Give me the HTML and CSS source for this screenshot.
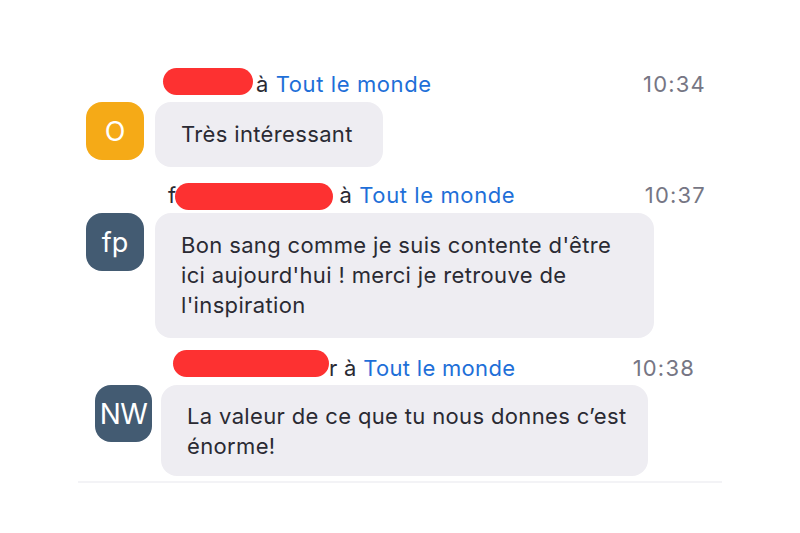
FILE: index.html
```html
<!DOCTYPE html>
<html lang="fr">
<head>
<meta charset="utf-8">
<title>Chat</title>
<link rel="stylesheet" href="styles.css">
</head>
<body>
<div class="chat">
  <div class="msg msg--one">
    <div class="head">
      <span class="who"><span class="redact redact--one"></span>à <span class="to">Tout le monde</span></span>
      <span class="time">10:34</span>
    </div>
    <div class="avatar avatar--orange">O</div>
    <div class="bubble">Très intéressant</div>
  </div>

  <div class="msg msg--two">
    <div class="head">
      <span class="who">f<span class="redact redact--two"></span> à <span class="to">Tout le monde</span></span>
      <span class="time">10:37</span>
    </div>
    <div class="avatar avatar--slate">fp</div>
    <div class="bubble">Bon sang comme je suis contente d'être<br>ici aujourd'hui ! merci je retrouve de<br>l'inspiration</div>
  </div>

  <div class="msg msg--three">
    <div class="head">
      <span class="who"><span class="redact redact--three"></span>r à <span class="to">Tout le monde</span></span>
      <span class="time">10:38</span>
    </div>
    <div class="avatar avatar--slate">NW</div>
    <div class="bubble">La valeur de ce que tu nous donnes c’est<br>énorme!</div>
  </div>

  <div class="divider"></div>
</div>
</body>
</html>
```

FILE: styles.css
```css
html, body {
  margin: 0;
  padding: 0;
  background: #ffffff;
}

body {
  font-family: "Inter", "Liberation Sans", sans-serif;
  color: #2a2a33;
}

.chat {
  padding: 71px 95px 0 86px;
  display: flex;
  flex-direction: column;
}

.msg {
  display: grid;
  grid-template-columns: 58px 1fr;
  column-gap: 11px;
  row-gap: 5px;
  align-items: start;
}

.msg--two {
  margin-top: 15px;
}

.msg--three {
  margin-top: 17px;
  padding: 0 11px 0 9px;
  column-gap: 8px;
  row-gap: 4px;
}

.head {
  grid-column: 2;
  grid-row: 1;
  display: flex;
  align-items: baseline;
  justify-content: space-between;
  height: 26px;
  line-height: 26px;
  font-size: 22px;
  letter-spacing: 0.6px;
  color: #2a2a33;
  padding-left: 8px;
}

.who {
  white-space: nowrap;
}

.msg--two .head {
  padding-left: 13px;
}

.msg--three .head {
  padding-left: 12px;
}

.redact {
  display: inline-block;
  height: 27px;
  border-radius: 14px;
  background: #fd3131;
  margin-top: -14px;
}

.redact--one {
  width: 90px;
  vertical-align: -3px;
  margin-right: 3px;
}

.redact--two {
  width: 158px;
  margin-left: -2px;
  vertical-align: -7px;
}

.redact--three {
  width: 156px;
  vertical-align: -1px;
}

.msg--three .who {
  letter-spacing: 0.3px;
}

.to {
  color: #1e6fd8;
}

.time {
  color: #767684;
  letter-spacing: 1.2px;
  margin-right: -1px;
}

.avatar {
  grid-column: 1;
  grid-row: 2;
  width: 58px;
  height: 58px;
  border-radius: 16px;
  color: #ffffff;
  font-size: 27px;
  display: flex;
  align-items: center;
  justify-content: center;
}

.msg--three .avatar {
  width: 57px;
  height: 57px;
  font-size: 28px;
  letter-spacing: -0.5px;
}

.avatar--orange {
  background: #f5aa17;
}

.avatar--slate {
  background: #435b72;
}

.bubble {
  grid-column: 2;
  grid-row: 2;
  justify-self: start;
  background: #eeedf2;
  border-radius: 16px;
  padding: 17px 30px 18px 26px;
  font-size: 22px;
  letter-spacing: 0.35px;
  line-height: 30px;
  color: #2a2a33;
}

.msg--two .bubble {
  padding-right: 43px;
}

.msg--three .bubble {
  padding: 16px 21px 15px 26px;
}

.divider {
  margin: 5px 0 0 -8px;
  height: 2px;
  width: 644px;
  background: #f3f3f6;
}
```
